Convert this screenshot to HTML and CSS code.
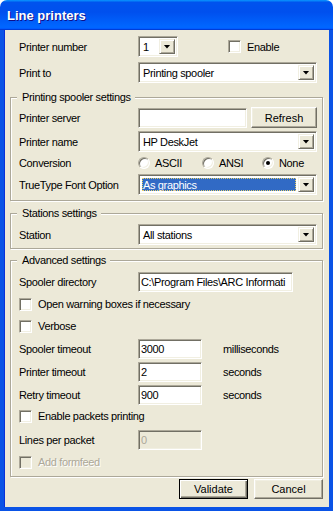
FILE: index.html
```html
<!DOCTYPE html>
<html lang="en">
<head>
    <meta charset="UTF-8">
    <title>Line printers</title>
    <link rel="stylesheet" href="styles.css">
</head>
<body>
    <div class="window">
        <div class="titlebar">Line printers</div>

        <div class="client">
            <div class="row top first">
                <span class="label">Printer number</span>
                <div class="combo w-num"><span class="combo-text">1</span><span class="drop"><i class="arrow"></i></span></div>
                <label class="check enable"><span class="box"></span>Enable</label>
            </div>
            <div class="row top mt5">
                <span class="label">Print to</span>
                <div class="combo w-wide"><span class="combo-text">Printing spooler</span><span class="drop"><i class="arrow"></i></span></div>
            </div>

            <!-- Printing spooler -->
            <div class="group g-spooler">
                <span class="legend">Printing spooler settings</span>
                <div class="row">
                    <span class="label">Printer server</span>
                    <div class="field w-server"></div>
                    <button class="btn refresh">Refresh</button>
                </div>
                <div class="row mt3">
                    <span class="label">Printer name</span>
                    <div class="combo w-wide"><span class="combo-text">HP DeskJet</span><span class="drop"><i class="arrow"></i></span></div>
                </div>
                <div class="row short mt1">
                    <span class="label">Conversion</span>
                    <label class="radio-opt ascii"><span class="radio"></span>ASCII</label>
                    <label class="radio-opt ansi"><span class="radio"></span>ANSI</label>
                    <label class="radio-opt"><span class="radio on"></span>None</label>
                </div>
                <div class="row mt1">
                    <span class="label">TrueType Font Option</span>
                    <div class="combo w-wide"><span class="combo-text selected">As graphics</span><span class="drop"><i class="arrow"></i></span></div>
                </div>
            </div>

            <!-- Stations -->
            <div class="group g-stations">
                <span class="legend">Stations settings</span>
                <div class="row">
                    <span class="label">Station</span>
                    <div class="combo w-wide"><span class="combo-text">All stations</span><span class="drop"><i class="arrow"></i></span></div>
                </div>
            </div>

            <!-- Advanced -->
            <div class="group g-advanced">
                <span class="legend">Advanced settings</span>
                <div class="row short">
                    <span class="label">Spooler directory</span>
                    <div class="field w-dir">C:\Program Files\ARC Informati</div>
                </div>
                <div class="row short mt2">
                    <label class="check"><span class="box"></span>Open warning boxes if necessary</label>
                </div>
                <div class="row short mt2">
                    <label class="check"><span class="box"></span>Verbose</label>
                </div>
                <div class="row short mt3">
                    <span class="label">Spooler timeout</span>
                    <div class="field w-num">3000</div>
                    <span class="unit">milliseconds</span>
                </div>
                <div class="row short mt3">
                    <span class="label">Printer timeout</span>
                    <div class="field w-num">2</div>
                    <span class="unit">seconds</span>
                </div>
                <div class="row short mt3">
                    <span class="label">Retry timeout</span>
                    <div class="field w-num">900</div>
                    <span class="unit">seconds</span>
                </div>
                <div class="row short mt1">
                    <label class="check"><span class="box"></span>Enable packets printing</label>
                </div>
                <div class="row short mt4">
                    <span class="label">Lines per packet</span>
                    <div class="field w-num disabled">0</div>
                </div>
                <div class="row short mt2">
                    <label class="check disabled"><span class="box"></span>Add formfeed</label>
                </div>
            </div>

            <div class="buttons">
                <button class="btn default">Validate</button>
                <button class="btn">Cancel</button>
            </div>
        </div>
    </div>
</body>
</html>
```

FILE: styles.css
```css
/* XP style dialog */
body {
    margin: 0;
    background: #fff;
    font-family: 'Liberation Sans', Arial, sans-serif;
    font-size: 11px;
    letter-spacing: -0.35px;
    color: #000;
}

.window {
    width: 333px;
    height: 511px;
    display: flex;
    flex-direction: column;
}

.titlebar {
    height: 30px;
    box-sizing: border-box;
    padding: 1px 0 0 7px;
    border-radius: 7px 7px 0 0;
    background: linear-gradient(180deg, #0997ff, #0053ee 8%, #0050ee 40%, #06f 88%, #06f 93%, #005bff 95%, #003dd7 96%, #003dd7);
    color: #fff;
    font-size: 13px;
    font-weight: bold;
    letter-spacing: 0;
    text-shadow: 1px 1px #0f1089;
    display: flex;
    align-items: center;
}

.client {
    flex: 1;
    background: #ece9d8;
    border: 4px solid #0a53e6;
    border-top: none;
    box-shadow: inset 1px 0 #0831d9;
    padding: 6px 6px 0 6px;
    display: flex;
    flex-direction: column;
}

.row {
    height: 21px;
    display: flex;
    align-items: center;
    padding-left: 8px;
    flex-shrink: 0;
}

.row.top {
    padding-left: 9px;
}

.row.short {
    height: 20px;
}

.mt1 { margin-top: 1px; }
.mt2 { margin-top: 2px; }
.mt3 { margin-top: 3px; }
.mt4 { margin-top: 4px; }
.mt5 { margin-top: 5px; }

.label {
    width: 119px;
    flex-shrink: 0;
    white-space: nowrap;
}

/* group boxes */
.group {
    position: relative;
    border: 1px solid #aca899;
    box-shadow: inset 1px 1px #fff, 1px 1px #fff;
    flex-shrink: 0;
}

.legend {
    position: absolute;
    top: -7px;
    left: 6px;
    padding: 0 4px 0 5px;
    line-height: 13px;
    background: #ece9d8;
}

.g-spooler {
    margin-top: 14px;
    padding: 9px 0 5px;
}

.g-stations {
    margin-top: 12px;
    padding: 10px 0 3px;
}

.g-advanced {
    margin-top: 11px;
    padding: 11px 0 4px;
}

/* edit boxes */
.field {
    height: 20px;
    box-sizing: border-box;
    background: #fff;
    border: 1px solid;
    border-color: #aca899 #fff #fff #aca899;
    box-shadow: inset 1px 1px #716f64, inset -1px -1px #f1efe2;
    padding: 0 0 0 2px;
    display: flex;
    align-items: center;
    white-space: nowrap;
    overflow: hidden;
}

.field.disabled {
    background: #ece9d8;
    color: #aca899;
}

.w-server { width: 109px; }
.w-dir { width: 155px; }
.w-num { width: 64px; }

.unit {
    margin-left: 21px;
}

/* combo boxes */
.combo {
    height: 21px;
    box-sizing: border-box;
    background: #fff;
    border: 1px solid;
    border-color: #aca899 #fff #fff #aca899;
    box-shadow: inset 1px 1px #716f64, inset -1px -1px #f1efe2;
    padding: 2px;
    display: flex;
}

.combo.w-num { width: 40px; }
.combo.w-wide { width: 179px; }

.combo-text {
    flex: 1;
    padding-left: 2px;
    display: flex;
    align-items: center;
    white-space: nowrap;
    overflow: hidden;
}

.combo-text.selected {
    margin: 1px 2px 1px 1px;
    padding-left: 1px;
    background: #316ac5;
    color: #fff;
    outline: 1px dotted #e6cf6a;
    outline-offset: -1px;
}

.drop {
    width: 16px;
    box-sizing: border-box;
    background: #ece9d8;
    border: 1px solid;
    border-color: #f1efe2 #716f64 #716f64 #f1efe2;
    box-shadow: inset 1px 1px #fff, inset -1px -1px #aca899;
    display: flex;
    align-items: center;
    justify-content: center;
}

.arrow {
    width: 7px;
    height: 4px;
    background: #000;
    clip-path: polygon(0 0, 100% 0, 50% 100%);
}

/* check boxes and radios */
.check {
    display: flex;
    align-items: center;
    gap: 6px;
    white-space: nowrap;
}

.check .box {
    width: 13px;
    height: 13px;
    box-sizing: border-box;
    background: #fff;
    border: 1px solid;
    border-color: #aca899 #fff #fff #aca899;
    box-shadow: inset 1px 1px #716f64, inset -1px -1px #f1efe2;
}

.check.enable {
    margin-left: 50px;
}

.check.disabled {
    color: #aca899;
    text-shadow: 1px 1px #fff;
}

.check.disabled .box {
    background: #ece9d8;
}

.radio-opt {
    display: flex;
    align-items: center;
    gap: 5px;
}

.radio-opt.ascii { width: 64px; }
.radio-opt.ansi { width: 60px; }

.radio {
    width: 12px;
    height: 12px;
    box-sizing: border-box;
    border-radius: 50%;
    background: #fff;
    border: 1px solid;
    border-color: #aca899 #fff #fff #aca899;
    box-shadow: inset 1px 1px #716f64, inset -1px -1px #f1efe2;
    display: flex;
    align-items: center;
    justify-content: center;
}

.radio.on::after {
    content: '';
    width: 4px;
    height: 4px;
    border-radius: 50%;
    background: #000;
}

/* push buttons */
.btn {
    width: 69px;
    height: 20px;
    box-sizing: border-box;
    padding: 0;
    background: #ece9d8;
    border: 1px solid;
    border-color: #fff #716f64 #716f64 #fff;
    box-shadow: inset -1px -1px #aca899, inset 1px 1px #f1efe2;
    font: inherit;
    color: #000;
}

.btn.refresh {
    width: 66px;
    height: 21px;
    margin-left: 4px;
}

.btn.default {
    border-color: #000;
    box-shadow: inset 1px 1px #fff, inset -1px -1px #716f64, inset -2px -2px #aca899;
}

.buttons {
    margin-top: 2px;
    display: flex;
    justify-content: flex-end;
    gap: 6px;
}
```
